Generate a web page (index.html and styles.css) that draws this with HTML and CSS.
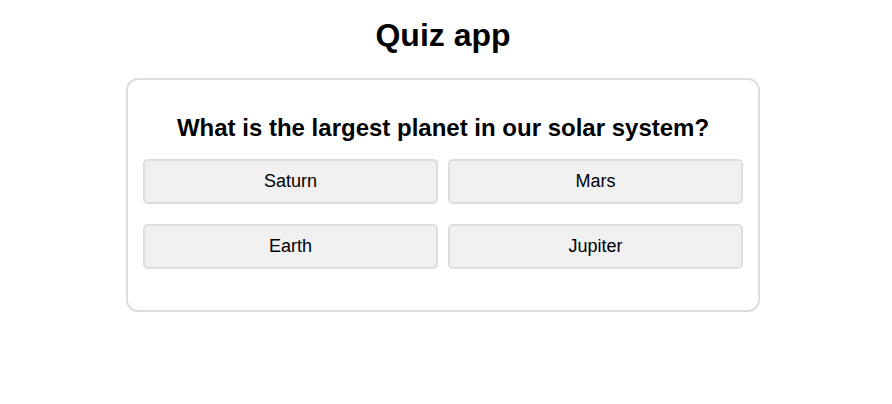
FILE: index.html
```html
<!DOCTYPE html>
<html lang="en">
<head>
<meta charset="utf-8">
<title>Quiz app</title>
<link rel="stylesheet" href="styles.css">
</head>
<body>
<div class="page">
  <h1 class="title">Quiz app</h1>
  <div class="card">
    <h2 class="question">What is the largest planet in our solar system?</h2>
    <div class="options">
      <button class="option">Saturn</button>
      <button class="option">Mars</button>
      <button class="option">Earth</button>
      <button class="option">Jupiter</button>
    </div>
  </div>
</div>
</body>
</html>
```
FILE: styles.css
```css
html, body {
  margin: 0;
  padding: 0;
  background: #fff;
}
body {
  font-family: "Liberation Sans", Arial, sans-serif;
  color: #000;
}
.page {
  width: 886px;
  display: flex;
  flex-direction: column;
  align-items: center;
}
.title {
  font-size: 32px;
  font-weight: bold;
  margin: 17px 0 24px;
  line-height: normal;
}
.card {
  width: 600px;
  border: 2px solid #ddd;
  border-radius: 12px;
  padding: 15px 15px 41px;
}
.question {
  font-size: 24px;
  font-weight: bold;
  text-align: center;
  margin: 19px 0 17px;
  line-height: normal;
}
.options {
  display: grid;
  grid-template-columns: 1fr 1fr;
  column-gap: 10px;
  row-gap: 20px;
}
.option {
  font-family: "Liberation Sans", Arial, sans-serif;
  font-size: 18px;
  line-height: normal;
  color: #000;
  background: #f0f0f0;
  border: 2px solid #ddd;
  border-radius: 5px;
  padding: 10px;
  margin: 0;
  cursor: pointer;
}
```
